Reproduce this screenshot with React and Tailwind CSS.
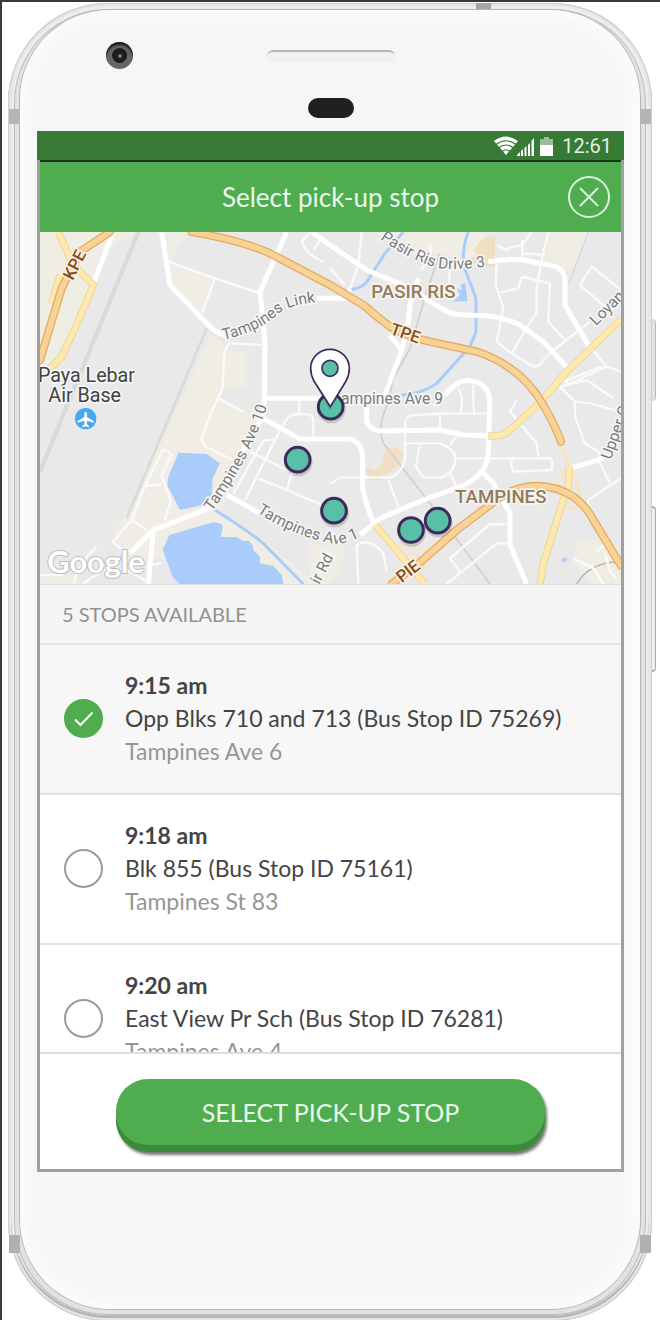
import { useState } from "react";

const STOPS = [
  { id: "75269", time: "9:15 am", name: "Opp Blks 710 and 713 (Bus Stop ID 75269)", street: "Tampines Ave 6" },
  { id: "75161", time: "9:18 am", name: "Blk 855 (Bus Stop ID 75161)", street: "Tampines St 83" },
  { id: "76281", time: "9:20 am", name: "East View Pr Sch (Bus Stop ID 76281)", street: "Tampines Ave 4" },
];

const LAND = [
  "M30 21H320L250 60 190 180 130 300 60 430 30 440Z",
  "M395 21H485L440 75 415 110Z",
  "M415 110L555 160 515 265 420 185Z",
  "M545 325L600 380H650V490L580 492 565 520 700 585 570 860 700 945 860 1077H470L430 1000 330 1000 240 935 300 850Z",
  "M1030 21H1360L1390 60 1370 105 1300 100 1200 80 1110 70Z",
  "M1556 21H1680L1630 140H1600L1540 105Z",
  "M1640 940L1700 950 1773 1000V1077H1680L1630 1010Z",
  "M830 955L945 965 930 1040 900 1077H840Z",
  "M30 1050H140L150 1077H30Z",
];

const WATER = [
  "M445 683L530 687 570 715 548 760 545 815 520 840 450 855 412 780 415 755Z",
  "M418 930L550 892Q578 895 578 905L572 935 620 937 640 948 655 947 668 960 670 975 690 995V1015L730 1023 755 1050 760 1077H450L430 1060 398 975Z",
  "M1270 230L1312 228 1306 175 1292 178 1296 195 1280 190 1290 210Z",
  "M1594 1003q8-8 18-4l-4 10q-8 6-12 0z",
];

const RIVERS = [
  "M555 855Q650 915 700 955L820 1077",
  "M1120 21L1065 85 1020 155Q1000 200 930 195",
  "M1315 21Q1298 60 1300 120L1338 220V320L1320 365Q1270 420 1220 475 1180 505 1115 510",
];

const MINOR = [
  "M415 110L555 160 690 205", "M555 160L515 265", "M605 355L695 360", "M600 350L583 380 578 490 540 570 515 640 525 665 610 705",
  "M565 520L640 560", "M808 525V565",
  "M400 673L425 688 395 750 422 830 405 885", "M400 673L345 783 305 885 350 915",
  "M345 783L395 778", "M305 885L248 950 290 985", "M130 1075Q150 1010 200 965", "M160 1075L230 1030", "M290 1035L360 1075", "M30 1050H100", "M350 1025L395 1013",
  "M850 635V585Q850 568 830 568H795Q775 570 765 590L735 645 645 825", "M735 645Q700 640 695 655L610 805", "M660 680L780 740", "M685 760L770 795 900 850", "M800 700L770 795",
  "M815 50Q830 90 880 110M815 50L840 21M850 75L868 48",
  "M995 21L985 120 960 190", "M900 130L945 180", "M1200 60L1203 85 1175 135", "M1260 110L1257 185",
  "M1400 60L1430 75Q1450 62 1475 62L1505 21M1477 45V105M1477 85L1545 90",
  "M1400 110L1397 180 1420 250 1400 350 1445 385 1510 425Q1530 428 1540 405L1565 380 1680 290",
  "M1412 202L1465 190 1475 158 1480 156 1560 175 1555 290 1605 345",
  "M1556 21L1540 80 1520 190V260L1445 385",
  "M1730 250L1650 180 1685 125 1773 195",
  "M1680 365L1730 425 1615 478 1605 468 1715 425M1730 425L1773 440",
  "M1590 485L1635 530 1680 535 1773 560", "M1670 465L1750 520", "M1590 485L1670 465",
  "M1635 530V575L1665 655 1705 680 1720 697", "M1705 705L1740 775", "M1773 760L1675 825V850",
  "M1285 490Q1305 520 1290 563M1330 480Q1328 520 1332 565",
  "M1245 510L1210 545", "M1378 565H1230L1140 572Q1125 580 1125 595V705Q1120 735 1085 757H930L905 775M1230 565V615",
  "M1125 655H1230Q1275 670 1276 705 1272 745 1235 758H1180L1158 725 1168 665M1278 635L1260 660M1260 745L1278 782",
  "M1075 765L1105 845", "M1278 700H1560Q1570 704 1565 735L1450 740 1443 720 1445 702",
  "M1460 525L1440 560 1520 655 1525 695",
  "M1440 898L1380 897 1260 1000 1290 1040M1440 955L1400 955 1250 1077",
  "M980 960Q1020 935 1060 985L1070 1040M980 960L985 1077", "M1740 945L1700 980M1630 1000L1690 1030 1720 1077M1725 985L1740 1040 1760 1060",
];

const MAJOR = [
  "M250 21L190 175", "M395 21L410 120 420 180 540 305Q560 325 600 335", "M770 21L690 200 705 350 703 525 695 580",
  "M705 520H870", "M860 220H945L960 190",
  "M845 21L900 60 1010 135 1140 190 1210 235Q1260 270 1300 270L1370 272Q1430 280 1470 300L1540 350 1615 432",
  "M1375 110Q1430 100 1480 105L1580 125Q1605 140 1605 165V240L1680 370",
  "M1165 160L1140 240 1135 290 1115 375 1065 510", "M1115 375L1080 330",
  "M1245 510Q1285 460 1320 467 1378 475 1379 530L1375 685Q1370 725 1355 740 1330 770 1290 785L1180 825 1050 880 990 930",
  "M1010 525V590Q1020 615 1050 618L1230 615 1300 630 1380 633",
  "M700 580L810 642H960Q995 650 998 700V790Q1005 830 1035 905", "M590 810L690 865", "M300 985L370 915 550 845 600 745 695 580",
  "M370 915L355 1077", "M1355 740L1390 775 1440 865V960L1490 1077", "M1620 730L1720 700", "M900 985L870 1040",
];

const YELLOW = [
  "M85 21L130 120 190 180 135 310 95 395 50 440", "M90 150L65 235",
  "M1375 633Q1420 636 1440 615L1525 538 1610 440 1773 283",
  "M1035 900L1185 1077", "M1618 725L1615 785 1600 825 1540 1015 1530 1077",
];

const ORANGE = [
  "M240 21L150 80 95 190 30 405",
  "M485 21Q630 45 720 85L900 180 1000 240Q1040 275 1080 305 1130 335 1200 350L1340 380Q1400 400 1440 430 1500 470 1540 540 1580 610 1593 650",
  "M1085 1077L1170 1012 1280 915 1380 840Q1440 785 1520 783 1580 783 1630 815 1670 845 1690 885L1773 1022",
];

const MAP_STOPS = [
  [902, 545], [803, 704], [912, 857], [1143, 915], [1223, 887],
];

function StopMap() {
  return (
    <svg role="img" aria-label="Map of Tampines pick-up stops" viewBox="30 21 1743 1056" preserveAspectRatio="xMidYMid slice" className="block h-[352px] w-full bg-[#e9e9e9]">
      <defs>
        <path id="link" d="M580 345Q690 320 750 262 790 235 880 230" />
        <path id="drive" d="M1050 42Q1130 100 1220 128 1290 140 1410 118" />
        <path id="ave10" d="M545 860Q670 690 720 515" />
        <path id="ave1" d="M680 862Q800 940 920 957 960 955 1030 915" />
      </defs>
      <g fill="#f0ede5">{LAND.map((d) => <path key={d} d={d} />)}</g>
      <path d="M1350 50l20-15h25v90h-50l-25-15 5-15h20l-15-20zM1068 670l30-5 20 20-5 30-40 30-20 5v18l-30-3-18-30 12-6 20 10 20-25z" fill="#f1dfc4" />
      <g fill="none" stroke="#dadad6">
        <path d="M325 21L30 740" strokeWidth="13" />
        <path d="M530 310L290 880" strokeWidth="8" />
        <path d="M1230 85L1190 200 1140 370 1090 460 1070 545Q1040 610 1060 655L1200 835 1380 1077" strokeWidth="5" stroke="#cfcfcf" />
        <path d="M1640 1077Q1680 1010 1773 1010" strokeWidth="5" stroke="#bbb" />
      </g>
      <g fill="#a9ccfa">{WATER.map((d) => <path key={d} d={d} />)}</g>
      <g fill="none" stroke="#a9ccfa" strokeWidth="9">{RIVERS.map((d) => <path key={d} d={d} />)}</g>
      <path d="M1675 21L1615 180" fill="none" stroke="#c9dcf0" strokeWidth="4" />
      <g fill="none" stroke="#fafafa" strokeWidth="7" strokeLinejoin="round">{MINOR.map((d) => <path key={d} d={d} />)}</g>
      <g fill="none" stroke="#fff" strokeWidth="15" strokeLinejoin="round">{MAJOR.map((d) => <path key={d} d={d} />)}</g>
      <g fill="none" stroke="#fae3bd" strokeWidth="8">
        <path d="M1100 960L1200 975M1130 1000Q1150 960 1190 1030M1593 655L1618 725M1580 780L1618 720 1655 815M1580 780L1600 850 1655 845" />
      </g>
      <g fill="none" strokeLinejoin="round">
        <g stroke="#ecd38f" strokeWidth="22">{YELLOW.map((d) => <path key={d} d={d} />)}</g>
        <g stroke="#fde8ae" strokeWidth="17">{YELLOW.map((d) => <path key={d} d={d} />)}</g>
        <g stroke="#e3ad66" strokeWidth="25" strokeLinecap="round">{ORANGE.map((d) => <path key={d} d={d} />)}</g>
        <g stroke="#f9d296" strokeWidth="17" strokeLinecap="round">{ORANGE.map((d) => <path key={d} d={d} />)}</g>
      </g>

      <g className="font-[Roboto,sans-serif]" stroke="#f5f5f5" strokeWidth="10" strokeLinejoin="round" paintOrder="stroke">
        <g fill="#7b7b7b" fontSize="47">
          <text><textPath href="#link">Tampines Link</textPath></text>
          <text><textPath href="#drive">Pasir Ris Drive 3</textPath></text>
          <text x="933" y="538">ampines Ave 9</text>
          <text><textPath href="#ave10">Tampines Ave 10</textPath></text>
          <text><textPath href="#ave1">Tampines Ave 1</textPath></text>
          <text transform="translate(1698 304) rotate(-45)">Loyang</text>
          <text transform="translate(1742 706) rotate(-70)">Upper C</text>
          <text transform="translate(868 1080) rotate(-63)">ir Rd</text>
        </g>
        <g fill="#95795b" fontSize="56" fontWeight="500">
          <text x="1024" y="219">PASIR RIS</text>
          <text x="1275" y="834">TAMPINES</text>
        </g>
        <g fill="#7d4e21" fontSize="50" fontWeight="500" stroke="#fdf0dc">
          <text transform="translate(128 168) rotate(-63)">KPE</text>
          <text transform="translate(1078 326) rotate(19)">TPE</text>
          <text transform="translate(1115 1075) rotate(-38)">PIE</text>
        </g>
        <g fill="#424242" fontSize="59">
          <text x="24" y="470">Paya Lebar</text>
          <text x="55" y="530">Air Base</text>
        </g>
      </g>
      <circle cx="167" cy="581" r="32" fill="#42a9f5" />
      <path d="M167 560q4 0 4 7v9l20 12v5l-20-6v11l6 5v4l-10-3-10 3v-4l6-5v-11l-20 6v-5l20-12v-9q0-7 4-7z" fill="#fff" />
      <text x="52" y="1044" className="font-[Lato,sans-serif]" fontSize="92" fontWeight="700" fill="#fff" stroke="#bdbdbd" strokeWidth="6" paintOrder="stroke">Google</text>

      {MAP_STOPS.map(([x, y]) => (
        <g key={x}>
          <circle cx={x + 2} cy={y + 7} r="43" fill="#000" opacity=".15" />
          <circle cx={x} cy={y} r="37" fill="#57c0a5" stroke="#3d2a5c" strokeWidth="9" />
        </g>
      ))}
      <path d="M900 556L855 478Q842 455 842 434A58 59 0 0 1 958 434Q958 455 945 478Z" fill="#000" opacity=".18" />
      <path d="M901 545L852 468Q842 450 842 430A58 57 0 0 1 958 430Q958 450 948 468Z" fill="#fff" stroke="#3d2a5c" strokeWidth="5" strokeLinejoin="round" />
      <circle cx="900" cy="430" r="24" fill="#57c0a5" stroke="#3d2a5c" strokeWidth="5" />
    </svg>
  );
}

function StatusBar() {
  return (
    <div className="flex h-[29px] items-center justify-end bg-[#377a36] pr-3">
      <svg aria-hidden="true" viewBox="0 0 60 20" className="h-5 w-[60px]" fill="#fff">
        <path d="M0 5Q12-4 24 5L12 19Z" />
        <path d="M2 8.500Q12 1 22 8.500M4.500 12Q12 6 19.500 12M8 15.500Q12 12 16 15.500" fill="none" stroke="#377a36" strokeWidth="1.200" />
        <path d="M23 20v-1l3-3v4zM27 20v-5l2-2v7zM30.500 20v-8l2-2v10zM34 20V9l2-2v13zM37.500 20V5l2.500-3v18z" />
        <path d="M46 9V3h4V1h5v2h4v6z" opacity=".5" />
        <path d="M46 9h13v11H46z" />
      </svg>
      <span className="ml-2 font-[Roboto,sans-serif] text-xl leading-7 text-[#e4f0e4]">12:61</span>
    </div>
  );
}

function StopRow({ stop, selected, onSelect }) {
  return (
    <li className={selected ? "border-b-2 border-[#e2e2e2] bg-[#f7f7f7]" : "border-b-2 border-[#e2e2e2] bg-white"}>
      <label className="flex cursor-pointer items-center gap-[22px] pb-[25px] pl-6 pr-4 pt-6">
        <span className="grid shrink-0 place-items-center">
          <input
            type="radio"
            name="stop"
            value={stop.id}
            checked={selected}
            onChange={onSelect}
            className="col-start-1 row-start-1 size-[39px] appearance-none rounded-full border-2 border-[#9a9a9a] bg-white checked:border-[#4fad4f] checked:bg-[#4fad4f]"
          />
          {selected && (
            <svg aria-hidden="true" viewBox="0 0 20 16" className="pointer-events-none col-start-1 row-start-1 h-4 w-5" fill="none" stroke="#fff" strokeWidth="2">
              <path d="M1 8.500L6.500 14 18.500 1.500" />
            </svg>
          )}
        </span>
        <span className="flex min-w-0 flex-col text-[23px] leading-[33px] text-[#444]">
          <strong className="font-bold">{stop.time}</strong>
          <span className="whitespace-nowrap">{stop.name}</span>
          <span className="text-[#969696]">{stop.street}</span>
        </span>
      </label>
    </li>
  );
}

export default function App() {
  const [selected, setSelected] = useState("75269");
  return (
    <div className="min-h-screen overflow-hidden border-l-2 border-t-2 border-[#3a3838] bg-white pl-[6px] pr-2 pt-px font-[Lato,sans-serif]">
      <div className="relative rounded-[100px] bg-[#e2e2e2] px-3 pb-3 pt-[7px] shadow-[inset_0_0_0_1px_#cfcfcf,inset_0_0_0_3px_#e6e6e6,inset_0_-3px_1px_3px_#b5b5b5,inset_0_0_0_6px_#ededed,inset_0_0_0_7px_#bdbdbd]">
        <i className="absolute left-[468px] top-0 h-[7px] w-[15px] bg-[#a5a5a5]" />
        <i className="absolute left-px top-[106px] h-[15px] w-[11px] bg-[#b5b5b5]" />
        <i className="absolute right-px top-[106px] h-[15px] w-[11px] bg-[#b5b5b5]" />
        <i className="absolute bottom-[68px] left-px h-[18px] w-[11px] bg-[#b0b0b0]" />
        <i className="absolute bottom-[68px] right-px h-[18px] w-[11px] bg-[#b0b0b0]" />
        <i className="absolute -right-1 top-[316px] h-[82px] w-1 rounded-r-sm border-r border-[#bbb] bg-[#e2e2e2]" />
        <i className="absolute -right-1 top-[503px] h-[166px] w-1 rounded-r-sm border-y-2 border-r border-[#aaa] bg-[#eee]" />

        <main className="relative rounded-[90px] bg-[#f6f6f6] pb-[137px] pl-[17px] pr-4 pt-8 shadow-[inset_0_0_18px_6px_#fdfdfd,0_0_0_1px_#b5b5b5]">
          <div aria-hidden="true" className="grid grid-cols-[1fr_128px_1fr]">
            <span className="ml-[69px] grid size-[27px] place-items-center rounded-full bg-[#666] shadow-[inset_0_3px_2px_#222]">
              <span className="grid size-[15px] place-items-center rounded-full bg-[#1c1c1c]"><span className="size-1 rounded-full bg-[#777]" /></span>
            </span>
            <span className="mt-2 h-3 rounded-t-md border-t-2 border-[#b5b5b5] bg-[#f1f1f1]" />
          </div>
          <div aria-hidden="true" className="mx-auto mb-[13px] mt-[29px] h-5 w-[46px] rounded-full bg-[#202020]" />

          <div className="bg-[#a0a0a0]">
            <StatusBar />
            <div className="mx-[3px] flex flex-col bg-white">
              <header className="grid h-[72px] grid-cols-[60px_1fr_60px] items-center border-t-2 border-[#12351a] bg-[#4fad4f]">
                <h1 className="col-start-2 text-center text-[26px] leading-8 text-[#e9f8ee]">Select pick-up stop</h1>
                <button type="button" aria-label="Close" className="ml-[7px] grid size-[42px] cursor-pointer place-items-center rounded-full border-2 border-[#d8f3e0]">
                  <svg aria-hidden="true" viewBox="0 0 20 20" className="size-5" stroke="#d8f3e0" strokeWidth="2"><path d="M1 1L19 19M19 1L1 19" /></svg>
                </button>
              </header>
              <StopMap />
              <h2 className="border-b-2 border-t border-[#e2e2e2] bg-[#f5f5f5] px-[22px] py-[14px] text-xl leading-[30px] text-[#919191]">5 STOPS AVAILABLE</h2>
              <ul className="h-[407px] overflow-y-auto [scrollbar-width:none]">
                {STOPS.map((stop) => (
                  <StopRow key={stop.id} stop={stop} selected={stop.id === selected} onSelect={() => setSelected(stop.id)} />
                ))}
              </ul>
              <footer className="border-t-2 border-[#dedede] px-[76px] pb-[17px] pt-[25px]">
                <button type="button" className="block h-[73px] w-full cursor-pointer rounded-[32px] bg-[#4fad4f] pb-[6px] text-[25px] text-[#e9f8ee] shadow-[inset_0_-7px_0_#3c8a3c,2px_3px_3px_#777]">
                  SELECT PICK-UP STOP
                </button>
              </footer>
            </div>
            <div className="h-[3px]" />
          </div>
        </main>
      </div>
    </div>
  );
}
